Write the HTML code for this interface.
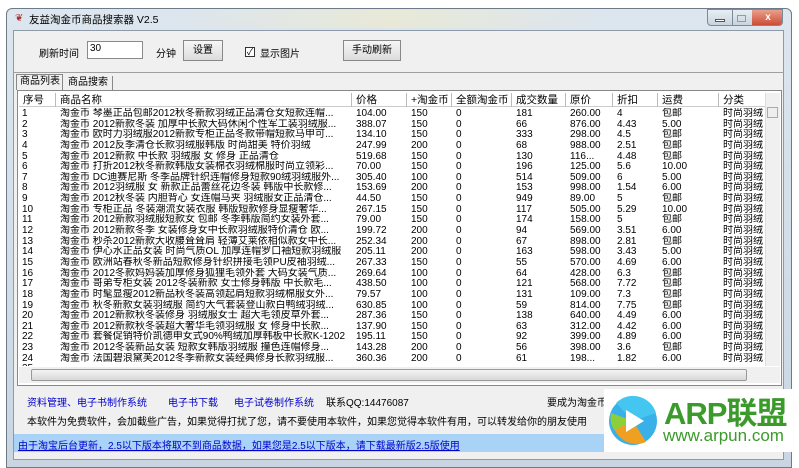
<!DOCTYPE html><html><head><meta charset="utf-8"><style>
*{margin:0;padding:0;box-sizing:border-box}
body{width:799px;height:452px;overflow:hidden;background:#fff;font-family:"Liberation Sans","Noto Sans CJK SC",sans-serif;font-size:10px;color:#000;position:relative}
.a{position:absolute;white-space:nowrap}
.row{position:absolute;left:19px;width:746px;height:11px;line-height:11px;font-size:10px}
.row span{position:absolute;overflow:hidden;white-space:nowrap}
.hd span{position:absolute;top:0;height:14px;line-height:14px;border-right:1px solid #bbb;padding-left:4px;font-size:10.5px}
</style></head><body>
<div class="a" style="left:6px;top:8px;width:786px;height:460px;border-radius:6px 6px 0 0;background:linear-gradient(#dde6ee,#c9d6e2);border:1px solid #6d7b88"></div>
<div class="a" style="left:180px;top:10px;width:420px;height:18px;background:linear-gradient(90deg,rgba(255,255,255,0),rgba(240,235,200,.6),rgba(255,255,255,0))"></div>
<div class="a" style="left:15px;top:13px;font-size:10px;color:#a33">❦</div>
<div class="a" style="left:29px;top:12px;font-size:10.5px">友益淘金币商品搜索器 V2.5</div>
<div class="a" style="left:707px;top:9px;width:76px;height:17px;border:1px solid #7b8a99;border-radius:0 0 4px 4px;background:linear-gradient(#e8eef4,#c8d3de);overflow:hidden">
<div class="a" style="left:24px;top:0;width:1px;height:17px;background:#7b8a99"></div>
<div class="a" style="left:44px;top:0;width:32px;height:17px;background:linear-gradient(#e8a08c,#c9412b);color:#fff;text-align:center;font-weight:bold;line-height:15px">x</div>
<div class="a" style="left:7px;top:9px;width:10px;height:3px;border:1px solid #555;background:#fff"></div>
<div class="a" style="left:29px;top:5px;width:9px;height:7px;border:1px solid #999"></div></div>
<div class="a" style="left:13px;top:30px;width:771px;height:430px;background:#f0f0f0;border:1px solid #8e9aa6"></div>
<div class="a" style="left:39px;top:45px">刷新时间</div>
<div class="a" style="left:87px;top:41px;width:56px;height:18px;background:#fff;border:1px solid #8a8a8a;padding-left:2px;line-height:14px">30</div>
<div class="a" style="left:156px;top:45px">分钟</div>
<div class="a" style="left:183px;top:40px;width:40px;height:21px;border:1px solid #888;background:linear-gradient(#f6f6f6,#dcdcdc);text-align:center;line-height:19px">设置</div>
<div class="a" style="left:245px;top:47px;width:10px;height:10px;border:1px solid #333;background:#fff;font-size:9px;line-height:8px;text-align:center">✓</div>
<div class="a" style="left:260px;top:45px">显示图片</div>
<div class="a" style="left:343px;top:40px;width:58px;height:21px;border:1px solid #888;background:linear-gradient(#f6f6f6,#dcdcdc);text-align:center;line-height:19px">手动刷新</div>
<div class="a" style="left:13px;top:72px;width:771px;height:1px;background:#a0a0a0"></div>
<div class="a" style="left:16px;top:74px;width:47px;height:16px;border:1px solid #888;border-bottom:none;background:#f0f0f0;line-height:14px;padding-left:3px">商品列表</div>
<div class="a" style="left:65px;top:76px;width:48px;height:14px;border-right:1px solid #888;line-height:14px;padding-left:3px">商品搜索</div>
<div class="a" style="left:17px;top:90px;width:765px;height:296px;border:1px solid #888;background:#fff"></div>
<div class="a hd" style="left:19px;top:93px;width:746px;height:14px;border-bottom:1px solid #ccc">
<span style="left:0;width:37px">序号</span><span style="left:37px;width:296px">商品名称</span><span style="left:333px;width:55px">价格</span><span style="left:388px;width:45px">+淘金币</span><span style="left:433px;width:60px">全额淘金币</span><span style="left:493px;width:54px">成交数量</span><span style="left:547px;width:47px">原价</span><span style="left:594px;width:45px">折扣</span><span style="left:639px;width:61px">运费</span><span style="left:700px;width:46px;border:none">分类</span></div>
<div class="a" style="left:765px;top:93px;width:15px;height:273px;background:#f0f0f0;border-left:1px solid #ddd"></div>
<div class="a" style="left:767px;top:107px;width:11px;height:11px;border:1px solid #aaa;background:#eee"></div>
<div class="a" style="left:19px;top:367px;width:761px;height:16px;background:#f0f0f0"></div>
<div class="a" style="left:31px;top:369px;width:716px;height:12px;border:1px solid #999;border-radius:2px;background:linear-gradient(#f4f4f4,#d8d8d8)"></div>
<div id="rows"></div>
<div class="a" style="left:27px;top:394px;color:#0000cc">资料管理、电子书制作系统</div>
<div class="a" style="left:168px;top:394px;color:#0000cc">电子书下载</div>
<div class="a" style="left:234px;top:394px;color:#0000cc">电子试卷制作系统</div>
<div class="a" style="left:326px;top:394px">联系QQ:14476087</div>
<div class="a" style="left:547px;top:394px">要成为淘金币达人</div>
<div class="a" style="left:27px;top:413px">本软件为免费软件，会加截些广告，如果觉得打扰了您，请不要使用本软件，如果您觉得本软件有用，可以转发给你的朋友使用</div>
<div class="a" style="left:14px;top:434px;width:770px;height:18px;background:#a9d2f7"></div>
<div class="a" style="left:18px;top:437px;color:#0000cc;text-decoration:underline">由于淘宝后台更新，2.5以下版本将取不到商品数据，如果您是2.5以下版本，请下载最新版2.5版使用</div>
<div class="a" style="left:604px;top:389px;width:195px;height:63px;background:#fff"></div>
<svg class="a" style="left:606px;top:388px" width="60" height="62"><circle cx="27" cy="33" r="24" fill="#3ab0e8"/><path d="M10 15 A24 24 0 0 1 50 25 L27 33Z" fill="#45c6f0"/><path d="M8 40 A24 24 0 0 0 40 54 L27 33Z" fill="#f0a020"/><path d="M5 25 A24 24 0 0 0 8 42 L27 33Z" fill="#8ccf3a"/><path d="M20 22 L38 33 L20 44Z" fill="#fff"/></svg>
<div class="a" style="left:664px;top:388px;font-size:31px;font-weight:bold;color:#3a9a2a;letter-spacing:-1px">ARP联盟</div>
<div class="a" style="left:663px;top:426px;font-size:17px;color:#3a9a2a">www.arpun.com</div>
<script>
var d=[["1","琴墨正品包邮2012秋冬新款羽绒正品清仓女短款连帽...","104.00","150","181","260.00","4","包邮"],
["2","2012新款冬装 加厚中长款大码休闲个性军工装羽绒服...","388.07","150","66","876.00","4.43","5.00"],
["3","欧时力羽绒服2012新款专柜正品冬款带帽短款马甲可...","134.10","150","333","298.00","4.5","包邮"],
["4","2012反季清仓长款羽绒服韩版 时尚甜美 特价羽绒","247.99","200","68","988.00","2.51","包邮"],
["5","2012新款 中长款 羽绒服 女 修身 正品清仓","519.68","150","130","116...","4.48","包邮"],
["6","打折2012秋冬新款韩版女装棉衣羽绒棉服时尚立领彩...","70.00","150","196","125.00","5.6","10.00"],
["7","DC迪赛尼斯 冬季品牌针织连帽修身短款90绒羽绒服外...","305.40","100","514","509.00","6","5.00"],
["8","2012羽绒服 女 新款正品蕾丝花边冬装 韩版中长款修...","153.69","200","153","998.00","1.54","6.00"],
["9","2012秋冬装 内胆背心 女连帽马夹 羽绒服女正品清仓...","44.50","150","949","89.00","5","包邮"],
["10","专柜正品 冬装潮流女装衣服 韩版短款修身显瘦奢华...","267.15","150","117","505.00","5.29","10.00"],
["11","2012新款羽绒服短款女 包邮 冬季韩版简约女装外套...","79.00","150","174","158.00","5","包邮"],
["12","2012新款冬季 女装修身女中长款羽绒服特价清仓 欧...","199.72","200","94","569.00","3.51","6.00"],
["13","秒杀2012新款大收腰耸耸肩 轻薄艾莱依相似款女中长...","252.34","200","67","898.00","2.81","包邮"],
["14","伊心水正品女装 时尚气质OL 加厚连帽罗口袖短款羽绒服","205.11","200","163","598.00","3.43","5.00"],
["15","欧洲站春秋冬新品短款修身针织拼接毛领PU皮袖羽绒...","267.33","150","55","570.00","4.69","6.00"],
["16","2012冬款妈妈装加厚修身狐狸毛领外套 大码女装气质...","269.64","100","64","428.00","6.3","包邮"],
["17","哥弟专柜女装 2012冬装新款 女士修身韩版 中长款毛...","438.50","100","121","568.00","7.72","包邮"],
["18","时髦显瘦2012新品秋冬装高领起肩短款羽绒棉服女外...","79.57","100","131","109.00","7.3","包邮"],
["19","秋冬新款女装羽绒服 简约大气套装登山款白鸭绒羽绒...","630.85","100","59","814.00","7.75","包邮"],
["20","2012新款秋冬装修身 羽绒服女士 超大毛领皮草外套...","287.36","150","138","640.00","4.49","6.00"],
["21","2012新款秋冬装超大奢华毛领羽绒服 女 修身中长款...","137.90","150","63","312.00","4.42","6.00"],
["22","套餐促销特价凯德申女式90%鸭绒加厚韩板中长款K-1202","195.11","150","92","399.00","4.89","6.00"],
["23","2012冬装新品女装 短款女韩版羽绒服 撞色连帽修身...","143.28","200","56","398.00","3.6","包邮"],
["24","法国碧浪黛芙2012冬季新款女装经典修身长款羽绒服...","360.36","200","61","198...","1.82","6.00"],
["25","","","","","","",""]];
var h="";
d.forEach(function(r,i){var t=108+i*10.64;var mx=i==24?"height:3px;overflow:hidden;":"";
h+='<div class="row" style="top:'+t+'px;'+mx+'"><span style="left:3px">'+r[0]+'</span><span style="left:41px;width:290px">'+(i==24?"":"淘金币 "+r[1])+'</span><span style="left:337px">'+r[2]+'</span><span style="left:392px">'+r[3]+'</span><span style="left:437px">'+(i==24?"":"0")+'</span><span style="left:497px">'+r[4]+'</span><span style="left:551px">'+r[5]+'</span><span style="left:598px">'+r[6]+'</span><span style="left:643px">'+r[7]+'</span><span style="left:704px">'+(i==24?"":"时尚羽绒")+'</span></div>';});
document.getElementById("rows").outerHTML=h;
</script>
</body></html>
